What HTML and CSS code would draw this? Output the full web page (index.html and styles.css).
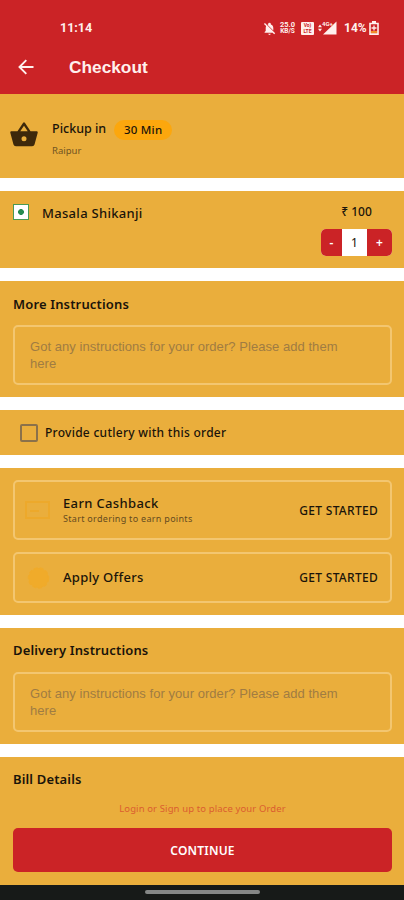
FILE: index.html
```html
<!DOCTYPE html>
<html lang="en">
<head>
<meta charset="utf-8">
<title>Checkout</title>
<link rel="stylesheet" href="styles.css">
</head>
<body>
<div class="screen">
  <header class="header">
    <div class="status">
      <span class="time">11:14</span>
      <div class="indicators">
        <svg class="bell" width="13" height="13" viewBox="0 0 24 24"><path fill="currentColor" d="M3.600 2 22.500 20.900 20.600 22.800 17.800 20H3v-1.500l2-2V11c0-1.300.3-2.500.8-3.500L1.700 3.900zM12 23.800c1.200 0 2.200-.9 2.200-2.200H9.800c0 1.300 1 2.200 2.200 2.200zM19 15.500V11c0-3.100-1.600-5.600-4.500-6.300V4a2.500 2.500 0 0 0-5 0v.700l-1.300.5z"/></svg>
        <div class="speed"><span>25.0</span><span>KB/S</span></div>
        <div class="volte"><span>Vo)</span><span>LTE</span></div>
        <div class="signal">
          <svg width="19" height="14" viewBox="0 0 19 14"><path fill="currentColor" d="M0 6.300 2 3.500l2 2.800zM0 7.700h4l-2 2.800zM5 13.500h13.500V.5z"/></svg>
          <span class="net">4G+</span>
        </div>
        <span class="percent">14%</span>
        <svg class="battery" width="10" height="14" viewBox="0 0 10 14"><path fill="#f28c28" d="M1.800 10h6.400v2.300H1.800z"/><path fill="none" stroke="currentColor" stroke-width="1.600" d="M1 2.500h8v10.600H1z"/><path fill="currentColor" d="M3 0h4v2H3z"/><path stroke="currentColor" stroke-width="1.300" d="M5 4.500v5M2.500 7h5"/></svg>
      </div>
    </div>
    <div class="titlebar">
      <svg width="16" height="16" viewBox="0 0 16 16"><path fill="none" stroke="currentColor" stroke-width="1.900" d="M15.500 8H2M8.300 1.200 1.500 8l6.800 6.800"/></svg>
      <h1>Checkout</h1>
    </div>
  </header>
  <main class="content">
    <section class="pickup">
      <svg class="basket" width="30" height="30" viewBox="0 0 24 24"><path fill="currentColor" d="m17.210 9-4.380-6.560a1 1 0 0 0-1.660 0L6.790 9H2c-.55 0-1 .45-1 1l.04.270 2.540 9.270A2 2 0 0 0 5.500 21h13a2 2 0 0 0 1.930-1.460l2.540-9.270L23 10c0-.55-.45-1-1-1zM9 9l3-4.400L15 9zm3 8a2 2 0 1 1 0-4 2 2 0 0 1 0 4z"/></svg>
      <div class="pickup-info">
        <div class="pickup-row"><span class="pickup-label">Pickup in</span><span class="pill">30 Min</span></div>
        <div class="place">Raipur</div>
      </div>
    </section>
    <section class="item">
      <span class="veg"></span>
      <span class="item-name">Masala Shikanji</span>
      <div class="item-side">
        <span class="price">₹ 100</span>
        <div class="stepper"><button>-</button><span>1</span><button>+</button></div>
      </div>
    </section>
    <section class="notes more">
      <h2 class="h-more">More Instructions</h2>
      <div class="field">Got any instructions for your order? Please add them here</div>
    </section>
    <section class="cutlery">
      <span class="checkbox"></span>
      <span class="cutlery-label">Provide cutlery with this order</span>
    </section>
    <section class="rewards">
      <div class="card cashback">
        <svg width="26" height="22" viewBox="0 0 26 22"><path fill="none" stroke="#eda92b" stroke-width="2" d="M1 3h23v16H1zM5 12h9"/></svg>
        <div class="card-text"><span class="card-title">Earn Cashback</span><span class="card-sub">Start ordering to earn points</span></div>
        <span class="action">GET STARTED</span>
      </div>
      <div class="card offers">
        <svg width="26" height="22" viewBox="0 0 26 22"><circle cx="13.500" cy="11" r="10" fill="#f0ab2a" stroke="#f0ab2a" stroke-width="1.500" stroke-dasharray="4 2"/></svg>
        <div class="card-text"><span class="card-title offer-title">Apply Offers</span></div>
        <span class="action">GET STARTED</span>
      </div>
    </section>
    <section class="notes delivery">
      <h2 class="h-delivery">Delivery Instructions</h2>
      <div class="field">Got any instructions for your order? Please add them here</div>
    </section>
    <section class="bill">
      <h2 class="h-bill">Bill Details</h2>
      <div class="checkout">
        <p class="login">Login or Sign up to place your Order</p>
        <button class="continue">CONTINUE</button>
      </div>
    </section>
  </main>
  <footer class="navbar"><span class="handle"></span></footer>
</div>
</body>
</html>
```
FILE: styles.css
```css
* { box-sizing: border-box; }
body { margin: 0; background: #fff; font-family: "Noto Sans", "Open Sans", sans-serif; color: #1a140a; }
h1, h2, p { margin: 0; }
button { border: 0; padding: 0; font-family: inherit; color: #fff; background: #cb2326; }
svg { display: block; flex: none; }
span { white-space: nowrap; }
.screen { width: 404px; height: 900px; display: flex; flex-direction: column; overflow: hidden; }

.header { height: 94px; background: #cb2326; color: #fff0ed; padding-top: 18px; flex: none; }
.status { height: 20px; display: flex; align-items: center; justify-content: space-between; padding: 0 25px 0 60px; }
.time { font: 700 12.500px/20px Roboto, sans-serif; }
.indicators { display: flex; align-items: center; }
.speed, .volte { display: flex; flex-direction: column; align-items: center; font-weight: 700; font-family: Roboto, sans-serif; }
.speed { width: 17px; margin-left: 3px; font-size: 6.500px; line-height: 7px; }
.speed span:first-child { font-size: 7.500px; }
.volte { width: 13px; height: 13px; margin: 0 4px 0 5px; background: currentColor; border-radius: 1px; font-size: 5px; line-height: 6.500px; }
.volte span { color: #cb2326; }
.signal { position: relative; margin-right: 7px; }
.net { position: absolute; left: 4px; top: -1px; font: 700 6px/7px Roboto, sans-serif; }
.percent { font: 700 12px/20px Roboto, sans-serif; width: 24px; margin-right: 1px; }
.titlebar { display: flex; align-items: center; height: 28px; margin-top: 15px; padding-left: 18px; gap: 35px; }
.titlebar h1 { font: 700 17.300px/28px "Liberation Sans", sans-serif; }

.content { flex: 1; min-height: 0; display: grid; grid-template-rows: 84px 77px 116px 45px 147px 116px 128px; row-gap: 13px; }
section { background: #eaae3c; }
h2 { font-size: 13px; line-height: 18px; font-weight: 600; letter-spacing: 0.150px; }

.pickup { display: flex; padding: 26px 10px 0 9px; gap: 13px; }
.basket { color: #3d280b; }
.pickup-row { display: flex; align-items: center; height: 20px; gap: 8px; }
.pickup-label { font-size: 12.500px; font-weight: 500; line-height: 18px; margin-top: -3px; }
.pill { background: #fca70d; border-radius: 10px; height: 20px; line-height: 20px; width: 58px; text-align: center; font-size: 11.500px; font-weight: 500; letter-spacing: 0.200px; }
.place { font-size: 9.500px; line-height: 14px; color: #705322; margin-top: 4px; }

.item { display: flex; padding: 12px 12px 0 13px; }
.veg { width: 16px; height: 16px; margin-top: 1px; border: 1.500px solid #4b9a52; background: radial-gradient(circle, #268c50 0 2.600px, #fff 3.200px); }
.item-name { font-size: 13px; font-weight: 500; line-height: 20px; margin-left: 13px; letter-spacing: 0.300px; }
.item-side { margin-left: auto; display: flex; flex-direction: column; align-items: center; }
.price { font-size: 12px; font-weight: 500; line-height: 18px; }
.stepper { display: grid; grid-template-columns: 21px 25px 25px; height: 27px; margin-top: 8px; border-radius: 5px; overflow: hidden; background: #fff; }
.stepper span, .stepper button { text-align: center; font-size: 12px; font-weight: 600; line-height: 27px; }
.stepper span { font-weight: 400; }

.notes { padding: 14px 12px 0 13px; }
.delivery { padding-top: 13px; }
.field { height: 60px; margin-top: 12px; border: 2px solid #f3c670; border-radius: 5px; padding: 11px 28px 0 15px; font: 13px/17px "Liberation Sans", sans-serif; letter-spacing: 0.050px; color: #a07c42; }
.delivery .field { margin-top: 13px; }

.cutlery { display: flex; align-items: center; padding-left: 20px; gap: 7px; }
.checkbox { width: 18px; height: 18px; border: 2px solid #8b714a; border-radius: 2px; }
.cutlery-label { font-size: 12px; font-weight: 500; letter-spacing: 0.270px; }

.rewards { padding: 12px 12px 0 13px; display: flex; flex-direction: column; gap: 12px; }
.card { display: flex; align-items: center; border: 2px solid #f3c670; border-radius: 5px; padding: 0 12px 0 10px; }
.cashback { height: 60px; }
.offers { height: 51px; }
.card-text { display: flex; flex-direction: column; margin-left: 12px; }
.card-title { font-size: 13px; font-weight: 500; line-height: 17px; letter-spacing: 0.350px; }
.offer-title { letter-spacing: 0.280px; }
.card-sub { font-size: 9px; line-height: 14px; color: #654b20; letter-spacing: 0.300px; }
.action { margin-left: auto; font-size: 12px; font-weight: 500; letter-spacing: 0.300px; }

.bill { display: flex; flex-direction: column; padding: 13px 12px 0 13px; }
.checkout { margin-top: 14px; }
.login { text-align: center; font-size: 9.500px; line-height: 14px; color: #db5d30; letter-spacing: 0.120px; }
.continue { display: block; width: 100%; height: 44px; margin-top: 12px; border-radius: 5px; font-size: 12px; font-weight: 600; letter-spacing: 0.200px; }

.navbar { height: 15px; background: #171a18; flex: none; display: flex; justify-content: center; padding-top: 5px; }
.handle { width: 115px; height: 4px; border-radius: 2px; background: #858786; }
```
